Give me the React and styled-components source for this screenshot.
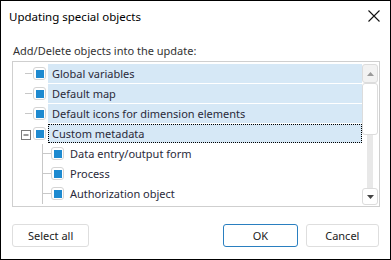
import React from "react";
import styled, { createGlobalStyle } from "styled-components";

const Global = createGlobalStyle`
  html, body { margin: 0; padding: 0; background: #fff; }
  body { font-family: "Noto Sans", "Open Sans", sans-serif; font-size: 11px; color: #1a1a1a; }
  * { box-sizing: border-box; }
`;

const Window = styled.div`
  width: 391px;
  height: 260px;
  border: 1px solid #000;
  background: #fff;
  display: flex;
  flex-direction: column;
`;

const TitleBar = styled.div`
  height: 30px;
  display: flex;
  align-items: center;
  justify-content: space-between;
  padding: 0 8px 0 8px;
`;

const Title = styled.div`
  font-size: 11.5px;
  color: #000;
`;

const CloseBtn = styled.div`
  width: 14px;
  height: 14px;
  margin-right: 1px;
  display: flex;
`;

const Body = styled.div`
  display: flex;
  flex-direction: column;
  padding: 9px 11px 0 11px;
`;

const Label = styled.div`
  font-size: 11px;
  color: #333;
  height: 20px;
  padding-left: 1px;
  display: flex;
  align-items: center;
`;

const TreeBox = styled.div`
  margin-top: 1px;
  height: 146px;
  width: 368px;
  border: 1px solid #cfcfcf;
  display: flex;
  padding: 2px 1px 0 0;
`;

const TreeList = styled.div`
  flex: 1;
  display: flex;
  flex-direction: column;
  overflow: hidden;
`;

const Row = styled.div`
  height: 20px;
  display: flex;
  align-items: flex-start;
  padding-left: ${(p) => p.$indent}px;
`;

const Gutter = styled.svg`
  width: 20px;
  height: 20px;
  flex: none;
`;

const Check = styled.span`
  width: 13px;
  height: 13px;
  margin: 3px 2px 0 0;
  flex: none;
  border: 1px solid #d4d4d4;
  border-radius: 3px;
  background: #fff;
  display: flex;
  align-items: center;
  justify-content: center;
  &::after {
    content: "";
    width: 8px;
    height: 8px;
    background: #1e8ad0;
  }
`;

const ItemText = styled.span`
  height: 19px;
  line-height: 17px;
  padding: 0 3px;
  color: #2a2a3a;
  white-space: nowrap;
  border: 1px dotted ${(p) => (p.$focus ? "#000" : "transparent")};
  background: ${(p) => (p.$selected ? "#d6e8f6" : "transparent")};
  ${(p) => (p.$selected ? "flex: 1;" : "")}
`;

const Scrollbar = styled.div`
  width: 16px;
  flex: none;
  display: flex;
  flex-direction: column;
  align-items: center;
  height: 141px;
`;

const ScrollBtn = styled.div`
  width: 16px;
  height: ${(p) => p.$h}px;
  border: 1px solid #dcdcdc;
  border-radius: 3px;
  background: ${(p) => p.$bg};
  display: flex;
  align-items: center;
  justify-content: center;
  flex: none;
`;

const Track = styled.div`
  width: 6px;
  flex: 1;
  background: #e8e8e8;
`;

const Footer = styled.div`
  display: flex;
  align-items: center;
  padding: 17px 11px 0 11px;
  gap: 8px;
`;

const Button = styled.button`
  height: 23px;
  width: ${(p) => p.$w}px;
  border: 1px solid ${(p) => (p.$primary ? "#2a7fc0" : "#dedede")};
  border-radius: 3px;
  background: #fff;
  font-family: inherit;
  font-size: 11px;
  color: #222;
  padding: 0;
  margin-left: ${(p) => p.$ml || 0}px;
`;

function GutterLines({ kind }) {
  return (
    <Gutter viewBox="0 0 20 20">
      {kind === "dash" && <line x1="12" y1="9.5" x2="19" y2="9.5" stroke="#c8c8c8" strokeWidth="1" />}
      {kind === "child" && (
        <>
          <line x1="11.5" y1="0" x2="11.5" y2="20" stroke="#c8c8c8" strokeWidth="1" />
          <line x1="12" y1="9.5" x2="20" y2="9.5" stroke="#c8c8c8" strokeWidth="1" />
        </>
      )}
      {kind === "minus" && (
        <>
          <rect x="8.5" y="6.5" width="9" height="9" fill="#fff" stroke="#7a7a7a" />
          <line x1="10.5" y1="11" x2="15.5" y2="11" stroke="#333" />
        </>
      )}
    </Gutter>
  );
}

const items = [
  { text: "Global variables", level: 0, kind: "dash", selected: true },
  { text: "Default map", level: 0, kind: "dash", selected: true },
  { text: "Default icons for dimension elements", level: 0, kind: "dash", selected: true },
  { text: "Custom metadata", level: 0, kind: "minus", selected: true, focus: true },
  { text: "Data entry/output form", level: 1, kind: "child" },
  { text: "Process", level: 1, kind: "child" },
  { text: "Authorization object", level: 1, kind: "child" },
];

export default function App() {
  return (
    <>
      <Global />
      <Window>
        <TitleBar>
          <Title>Updating special objects</Title>
          <CloseBtn>
            <svg width="14" height="14" viewBox="0 0 14 14">
              <path d="M1.5 1.5 L12.5 12.5 M12.5 1.5 L1.5 12.5" stroke="#111" strokeWidth="1.1" fill="none" />
            </svg>
          </CloseBtn>
        </TitleBar>
        <Body>
          <Label>Add/Delete objects into the update:</Label>
          <TreeBox>
            <TreeList>
              {items.map((it) => (
                <Row key={it.text} $indent={it.level * 18}>
                  <GutterLines kind={it.kind} />
                  <Check />
                  <ItemText $selected={it.selected} $focus={it.focus}>
                    {it.text}
                  </ItemText>
                </Row>
              ))}
            </TreeList>
            <Scrollbar>
              <ScrollBtn $h={19} $bg="#f2f2f2">
                <svg width="7" height="4" viewBox="0 0 7 4"><path d="M3.5 0 L7 4 L0 4 Z" fill="#9a9a9a" /></svg>
              </ScrollBtn>
              <ScrollBtn $h={52} $bg="#fff" />
              <Track />
              <ScrollBtn $h={17} $bg="#fff">
                <svg width="7" height="4" viewBox="0 0 7 4"><path d="M0 0 L7 0 L3.5 4 Z" fill="#444" /></svg>
              </ScrollBtn>
            </Scrollbar>
          </TreeBox>
        </Body>
        <Footer>
          <Button $w={78}>Select all</Button>
          <Button $w={75} $primary $ml={126}>OK</Button>
          <Button $w={74}>Cancel</Button>
        </Footer>
      </Window>
    </>
  );
}
